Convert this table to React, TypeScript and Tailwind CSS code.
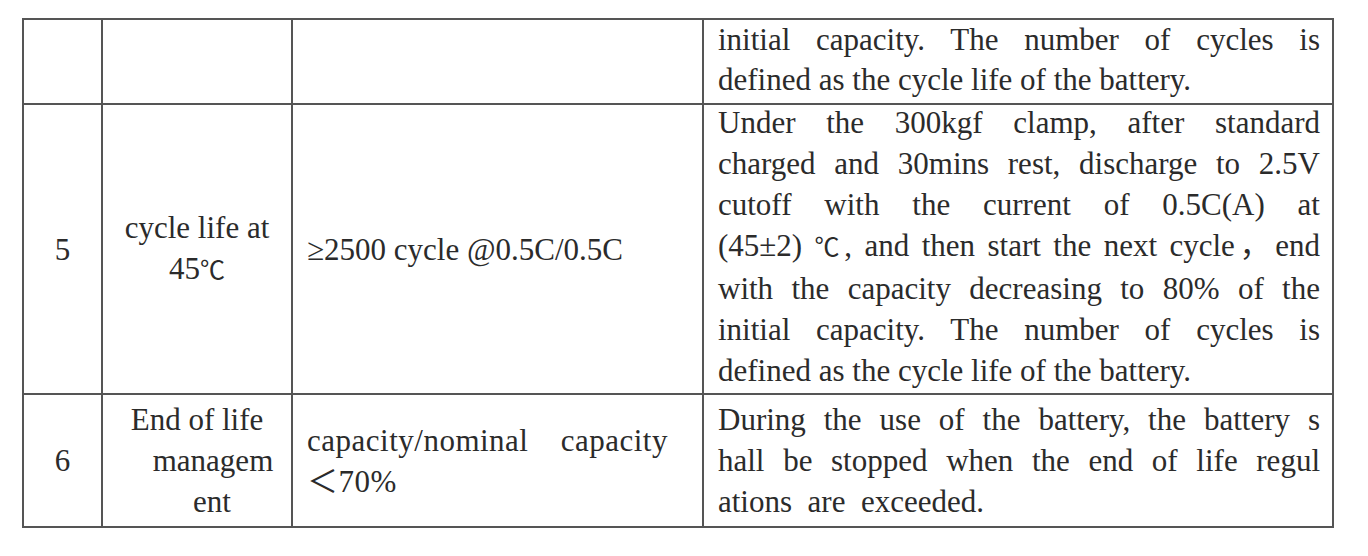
// Battery spec table (scanned-document style)

type Line = { text: React.ReactNode; last?: boolean };

function Justified({ lines, className = "" }: { lines: Line[]; className?: string }) {
  return (
    <div className={className}>
      {lines.map((l, i) => (
        <div
          key={i}
          className={
            l.last
              ? "whitespace-pre text-left"
              : "whitespace-pre text-justify [text-align-last:justify]"
          }
        >
          {l.text}
        </div>
      ))}
    </div>
  );
}

const cell = "border-2 border-[#555555] p-0";

export default function App() {
  return (
    <div className="min-h-[556px] w-[1368px] bg-white pt-[18px] pl-[22px] font-['Liberation_Serif','Noto_Sans_CJK_SC',serif] text-[31px] leading-[41px] text-[#2b2b2b]">
      <table className="table-fixed border-collapse w-[1310px]">
        <colgroup>
          <col className="w-[79px]" />
          <col className="w-[190px]" />
          <col className="w-[411px]" />
          <col className="w-[630px]" />
        </colgroup>
        <tbody>
          {/* continued row from previous page */}
          <tr className="h-[84px]">
            <td className={cell}></td>
            <td className={cell}></td>
            <td className={cell}></td>
            <td className={`${cell} align-bottom pl-[14px] pr-[12px] pb-[3px]`}>
              <Justified
                className="leading-[40px]"
                lines={[
                  { text: "initial capacity. The number of cycles is" },
                  { text: "defined as the cycle life of the battery.", last: true },
                ]}
              />
            </td>
          </tr>

          <tr className="h-[290px]">
            <td className={`${cell} text-center align-middle`}>5</td>
            <td className={`${cell} text-center align-middle`}>
              <div>cycle life at</div>
              <div>
                45<span className="text-[25px]">℃</span>
              </div>
            </td>
            <td className={`${cell} align-middle pl-[14px] pr-[34px]`}>
              ≥2500 cycle @0.5C/0.5C
            </td>
            <td className={`${cell} align-top pl-[14px] pr-[12px] pt-0`}>
              <Justified
                className="-mt-[3px]"
                lines={[
                  { text: "Under the 300kgf clamp, after standard" },
                  { text: "charged and 30mins rest, discharge to 2.5V" },
                  { text: "cutoff with the current of 0.5C(A) at" },
                  {
                    text: (
                      <>
                        (45±2) <span className="text-[25px]">℃</span>, and then start the next cycle，end
                      </>
                    ),
                  },
                  { text: "with the capacity decreasing to 80% of the" },
                  { text: "initial capacity. The number of cycles is" },
                  { text: "defined as the cycle life of the battery.", last: true },
                ]}
              />
            </td>
          </tr>

          <tr className="h-[133px]">
            <td className={`${cell} text-center align-middle`}>6</td>
            <td className={`${cell} text-center align-middle`}>
              <div>End of life</div>
              <div className="pl-[32px]">managem</div>
              <div className="pl-[30px]">ent</div>
            </td>
            <td className={`${cell} align-middle pl-[14px] pr-[34px] tracking-[0.5px]`}>
              <Justified
                lines={[
                  { text: "capacity/nominal capacity" },
                  { text: "＜70%", last: true },
                ]}
              />
            </td>
            <td className={`${cell} align-middle pl-[14px] pr-[12px]`}>
              <Justified
                lines={[
                  { text: "During the use of the battery, the battery s" },
                  { text: "hall be stopped when the end of life regul" },
                  { text: "ations  are  exceeded.", last: true },
                ]}
              />
            </td>
          </tr>
        </tbody>
      </table>
    </div>
  );
}
